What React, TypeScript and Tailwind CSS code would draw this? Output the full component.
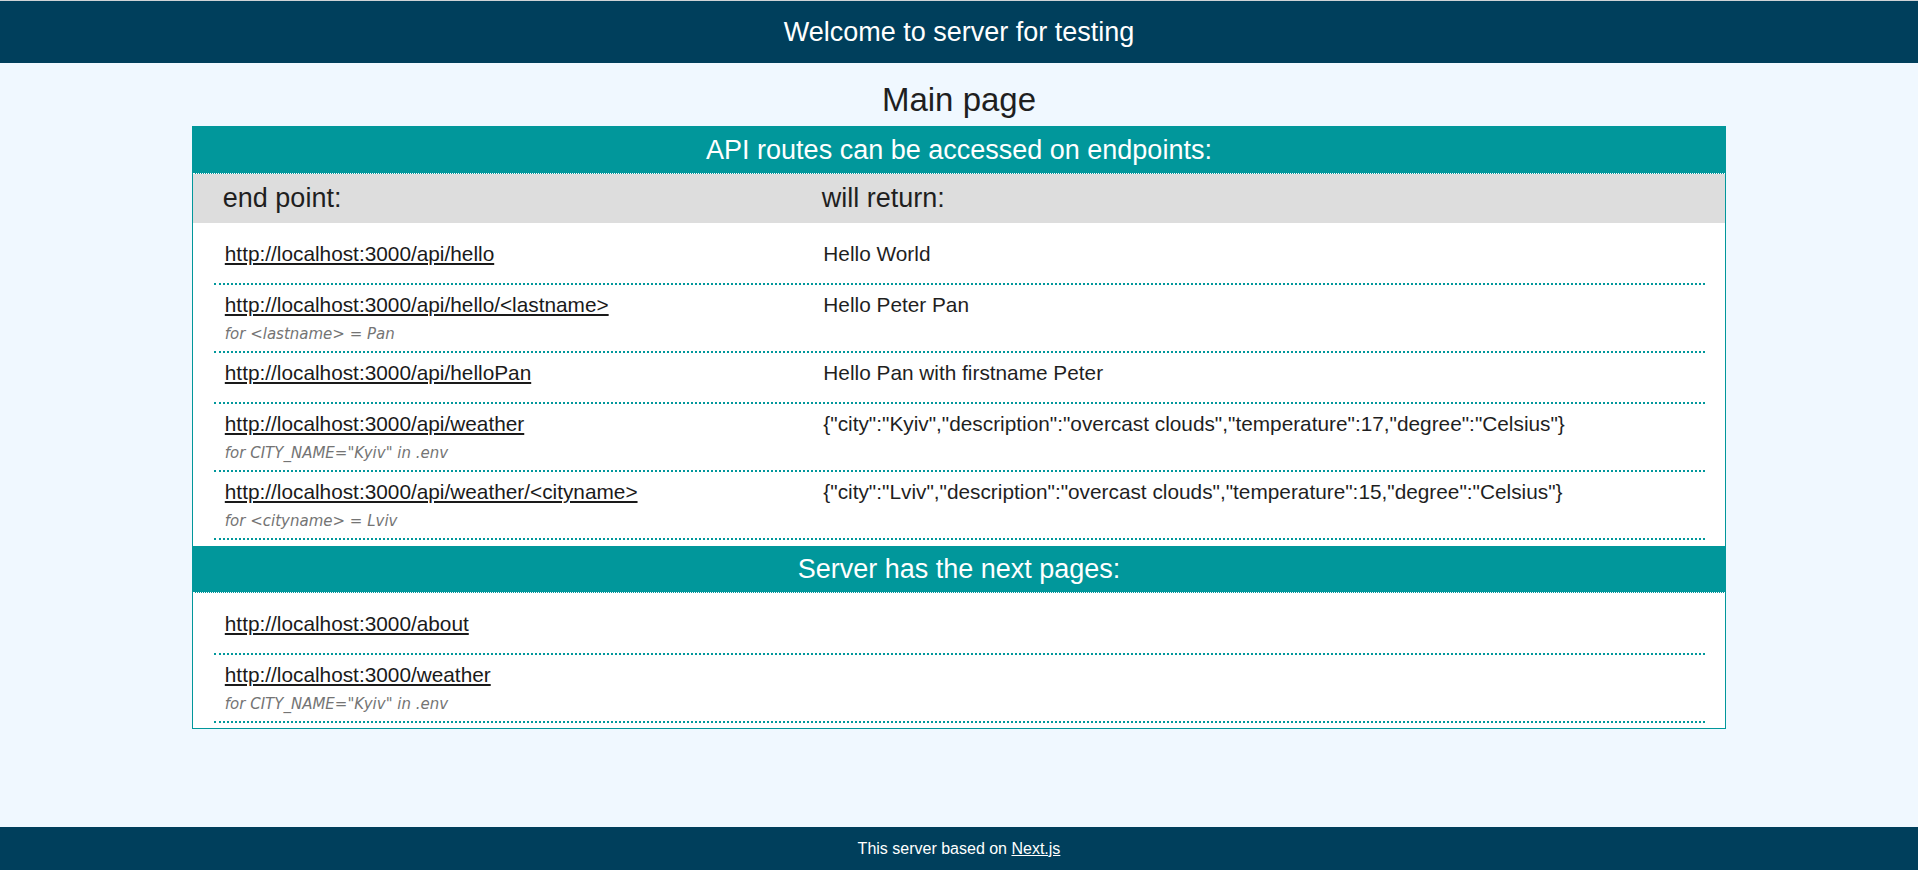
const apiRoutes = [
  { href: "http://localhost:3000/api/hello", result: "Hello World" },
  { href: "http://localhost:3000/api/hello/<lastname>", note: "for <lastname> = Pan", result: "Hello Peter Pan" },
  { href: "http://localhost:3000/api/helloPan", result: "Hello Pan with firstname Peter" },
  {
    href: "http://localhost:3000/api/weather",
    note: 'for CITY_NAME="Kyiv" in .env',
    result: '{"city":"Kyiv","description":"overcast clouds","temperature":17,"degree":"Celsius"}'
  },
  {
    href: "http://localhost:3000/api/weather/<cityname>",
    note: "for <cityname> = Lviv",
    result: '{"city":"Lviv","description":"overcast clouds","temperature":15,"degree":"Celsius"}'
  }
];

const pages = [
  { href: "http://localhost:3000/about" },
  { href: "http://localhost:3000/weather", note: 'for CITY_NAME="Kyiv" in .env' }
];

type Row = { href: string; note?: string; result?: string };

function RouteRow({ row }: { row: Row }) {
  return (
    <div
      className={`mr-[20px] ml-[21px] grid grid-cols-[40%_1fr] border-b-2 border-dotted border-[#01979b] pt-[8px] text-[20.8px] leading-[24px] ${
        row.note ? "pb-[8px]" : "pb-[17px]"
      }`}
    >
      <div className="px-[11px]">
        <a href={row.href} className="text-[#1a1a1a] underline">
          {row.href}
        </a>
        {row.note && (
          <div className="mt-[8px] font-['DejaVu_Sans',sans-serif] text-[15px] leading-[18px] text-[#747474] italic">
            {row.note}
          </div>
        )}
      </div>
      <div className="pr-[10px] pl-[13px] whitespace-nowrap">{row.result}</div>
    </div>
  );
}

function SectionTitle({ children }: { children: React.ReactNode }) {
  return (
    <div className="flex h-[47px] items-center justify-center border-b border-dotted border-white bg-[#01979b] text-[27px] text-white">
      {children}
    </div>
  );
}

export default function App() {
  return (
    <div className="flex min-h-screen flex-col bg-[#f0f8ff] font-['Liberation_Sans',Arial,sans-serif] text-[#1f1f1f]">
      <header className="flex h-[63px] items-center justify-center border-t border-[#cfd3d6] bg-[#003f5c] text-[27px] text-white">
        Welcome to server for testing
      </header>

      <main className="flex-1">
        <h1 className="mt-[17px] text-center text-[33px] leading-[40px]">Main page</h1>

        <div className="mx-auto mt-[6px] w-[80%] border border-[#01979b] bg-white">
          <SectionTitle>API routes can be accessed on endpoints:</SectionTitle>
          <div className="grid h-[49px] grid-cols-[40%_1fr] items-center bg-[#dddddd] px-[20px] text-[27px]">
            <div className="px-[10px]">end point:</div>
            <div className="pr-[10px] pl-[12px]">will return:</div>
          </div>
          <div className="pt-[11px] pb-[6px]">
            {apiRoutes.map((row) => (
              <RouteRow key={row.href} row={row} />
            ))}
          </div>

          <SectionTitle>Server has the next pages:</SectionTitle>
          <div className="pt-[11px] pb-[5px]">
            {pages.map((row) => (
              <RouteRow key={row.href} row={row} />
            ))}
          </div>
        </div>
      </main>

      <footer className="flex h-[43px] items-center justify-center bg-[#003f5c] text-[16px] text-white">
        This server based on&nbsp;
        <a href="https://nextjs.org" className="underline">
          Next.js
        </a>
      </footer>
    </div>
  );
}
